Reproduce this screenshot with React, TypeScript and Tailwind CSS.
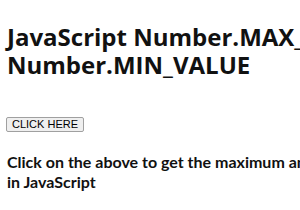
export default function App() {
  return (
    <div className="w-[300px] h-[210px] overflow-hidden bg-white">
      <div className="w-[560px] pl-[6px] pt-[23px] text-[#111]">
        <h1 className="whitespace-nowrap font-bold text-[24px] leading-[28px] font-['Open_Sans',sans-serif] pl-[1px]">
          JavaScript Number.MAX_VALUE and
          <br />
          Number.MIN_VALUE
        </h1>
        <div className="mt-[38px] flex">
          <button className="font-['Liberation_Sans',Arial,sans-serif] text-[11px] leading-[11px] h-[15px] px-[5px] border border-[#a0a0a0] bg-[#efefef] rounded-[2px] text-black">
            CLICK HERE
          </button>
        </div>
        <p className="mt-[20px] whitespace-nowrap font-bold text-[16px] leading-[20px] font-['Lato',sans-serif] pl-[1px]">
          Click on the above to get the maximum and minimum value
          <br />
          in JavaScript
        </p>
      </div>
    </div>
  );
}
